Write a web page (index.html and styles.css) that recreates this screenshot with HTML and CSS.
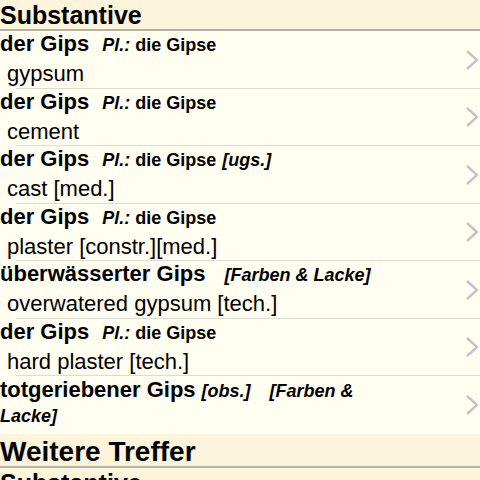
FILE: index.html
```html
<!DOCTYPE html>
<html lang="de">
<head>
    <meta charset="UTF-8">
    <meta name="viewport" content="width=device-width, initial-scale=1.0">
    <title>Gips</title>
    <link rel="stylesheet" href="styles.css">
</head>
<body>
    <div class="section-head">Substantive</div>
    <ul class="results">
        <li class="entry">
            <div class="term"><b>der Gips</b><span class="pl"><i>Pl.:</i> die Gipse</span></div>
            <div class="trans">gypsum</div>
            <svg class="chevron" viewBox="0 0 14 22"><polyline points="2,2 12,11 2,20"/></svg>
        </li>
        <li class="entry">
            <div class="term"><b>der Gips</b><span class="pl"><i>Pl.:</i> die Gipse</span></div>
            <div class="trans">cement</div>
            <svg class="chevron" viewBox="0 0 14 22"><polyline points="2,2 12,11 2,20"/></svg>
        </li>
        <li class="entry">
            <div class="term"><b>der Gips</b><span class="pl"><i>Pl.:</i> die Gipse</span><span class="use">[ugs.]</span></div>
            <div class="trans">cast [med.]</div>
            <svg class="chevron" viewBox="0 0 14 22"><polyline points="2,2 12,11 2,20"/></svg>
        </li>
        <li class="entry">
            <div class="term"><b>der Gips</b><span class="pl"><i>Pl.:</i> die Gipse</span></div>
            <div class="trans">plaster [constr.][med.]</div>
            <svg class="chevron" viewBox="0 0 14 22"><polyline points="2,2 12,11 2,20"/></svg>
        </li>
        <li class="entry">
            <div class="term"><b>überwässerter Gips</b><span class="subj">[Farben &amp; Lacke]</span></div>
            <div class="trans">overwatered gypsum [tech.]</div>
            <svg class="chevron" viewBox="0 0 14 22"><polyline points="2,2 12,11 2,20"/></svg>
        </li>
        <li class="entry">
            <div class="term"><b>der Gips</b><span class="pl"><i>Pl.:</i> die Gipse</span></div>
            <div class="trans">hard plaster [tech.]</div>
            <svg class="chevron" viewBox="0 0 14 22"><polyline points="2,2 12,11 2,20"/></svg>
        </li>
        <li class="entry wrap">
            <div class="term"><b>totgeriebener Gips</b><span class="use">[obs.]</span><span class="subj">[Farben &amp; Lacke]</span></div>
            <svg class="chevron" viewBox="0 0 14 22"><polyline points="2,2 12,11 2,20"/></svg>
        </li>
    </ul>
    <div class="section-head big">Weitere Treffer</div>
    <div class="section-head">Substantive</div>
</body>
</html>
```

FILE: styles.css
```css
body {
    margin: 0;
    font-family: "Liberation Sans", Arial, sans-serif;
    background-color: #fffef1;
    color: #000;
    overflow: hidden;
}

.section-head {
    height: 31px;
    padding-top: 2px;
    box-sizing: border-box;
    line-height: 27px;
    font-size: 25px;
    font-weight: bold;
    background-color: #fdf4dc;
    border-bottom: 2px solid #b2b2a2;
}

.section-head.big {
    height: 34px;
    padding-top: 3px;
    line-height: 29px;
    font-size: 28px;
}

.results {
    list-style: none;
    margin: 0;
    padding: 0;
}

.entry {
    position: relative;
    height: 57.5px;
    box-sizing: border-box;
    padding-right: 80px;
}

.entry:after {
    content: '';
    position: absolute;
    left: 16px;
    right: 0;
    bottom: 0;
    height: 1px;
    background-color: #dcdcd0;
}

.entry:last-child:after {
    display: none;
}

.term {
    font-size: 22px;
    line-height: 25px;
}

.term span {
    font-size: 18px;
    font-weight: bold;
}

.pl {
    margin-left: 13px;
}

.pl i,
.use,
.subj {
    font-style: italic;
}

.use {
    margin-left: 6px;
}

.subj {
    margin-left: 19px;
}

.trans {
    font-size: 22px;
    line-height: 32px;
    padding-left: 7px;
}

.entry.wrap {
    height: 58px;
    padding-top: 2px;
}

.entry.wrap .term {
    line-height: 24px;
}

.chevron {
    position: absolute;
    right: 1px;
    top: 50%;
    width: 14px;
    height: 22px;
    transform: translateY(-50%);
    fill: none;
    stroke: #c4c4c4;
    stroke-width: 2.4;
}
```
